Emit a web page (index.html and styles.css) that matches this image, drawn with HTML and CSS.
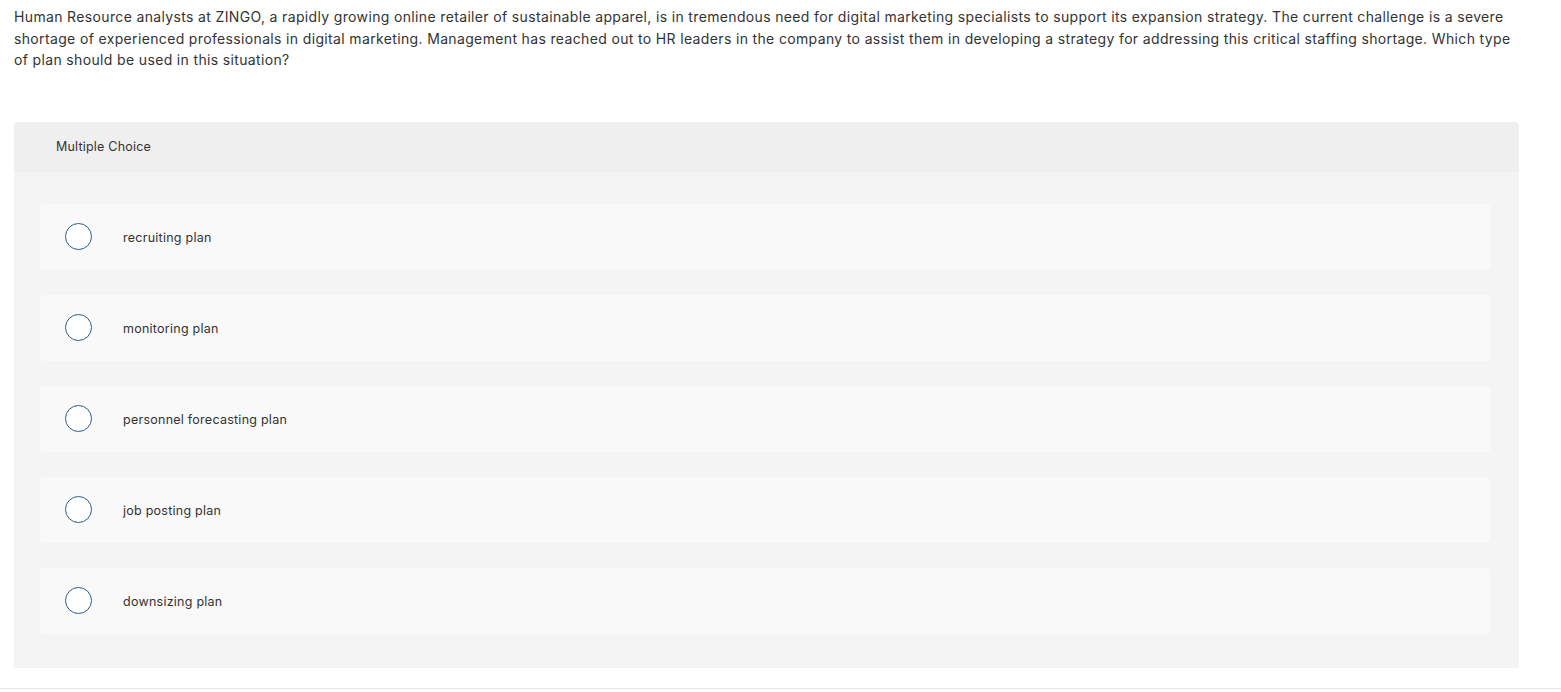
FILE: index.html
```html
<!DOCTYPE html>
<html>
<head>
<meta charset="utf-8">
<link rel="stylesheet" href="styles.css">
</head>
<body>
<div class="page">
  <p class="question">Human Resource analysts at ZINGO, a rapidly growing online retailer of sustainable apparel, is in tremendous need for digital marketing specialists to support its expansion strategy. The current challenge is a severe shortage of experienced professionals in digital marketing. Management has reached out to HR leaders in the company to assist them in developing a strategy for addressing this critical staffing shortage. Which type of plan should be used in this situation?</p>
  <div class="card">
    <div class="card-header">Multiple Choice</div>
    <div class="card-body">
      <div class="option"><span class="radio"></span><span class="label">recruiting plan</span></div>
      <div class="option"><span class="radio"></span><span class="label">monitoring plan</span></div>
      <div class="option"><span class="radio"></span><span class="label">personnel forecasting plan</span></div>
      <div class="option"><span class="radio"></span><span class="label">job posting plan</span></div>
      <div class="option"><span class="radio"></span><span class="label">downsizing plan</span></div>
    </div>
  </div>
  <div class="rule"></div>
</div>
</body>
</html>
```

FILE: styles.css
```css
html, body {
  margin: 0;
  padding: 0;
  background: #ffffff;
}
body {
  font-family: Inter, "Open Sans", "Liberation Sans", sans-serif;
  color: #333333;
}
.page {
  display: flex;
  flex-direction: column;
}
.question {
  margin: 6px 0 0 14px;
  padding-right: 40px;
  font-size: 14px;
  line-height: 21.5px;
  letter-spacing: 0.35px;
  color: #333333;
}
.card {
  margin: 51px 42px 0 14px;
  background: #f4f4f4;
  border-radius: 4px 4px 0 0;
}
.card-header {
  height: 50px;
  display: flex;
  align-items: center;
  padding-left: 42px;
  background: #efefef;
  border-radius: 4px 4px 0 0;
  font-size: 12.5px;
  letter-spacing: 0.2px;
  color: #333333;
}
.card-body {
  display: flex;
  flex-direction: column;
  gap: 25px;
  padding: 32px 29px 34px 26px;
}
.option {
  height: 66px;
  display: flex;
  align-items: center;
  background: #f9f9f9;
  border-radius: 4px;
  padding-left: 25px;
}
.radio {
  width: 25px;
  height: 25px;
  border: 1.5px solid #2e5a87;
  border-radius: 50%;
  background: #ffffff;
  flex: none;
}
.label {
  margin-left: 31px;
  padding-top: 2px;
  font-size: 12.5px;
  letter-spacing: 0.25px;
  color: #333333;
}
.rule {
  margin-top: 20px;
  height: 1px;
  background: #e9e9e9;
}
```
